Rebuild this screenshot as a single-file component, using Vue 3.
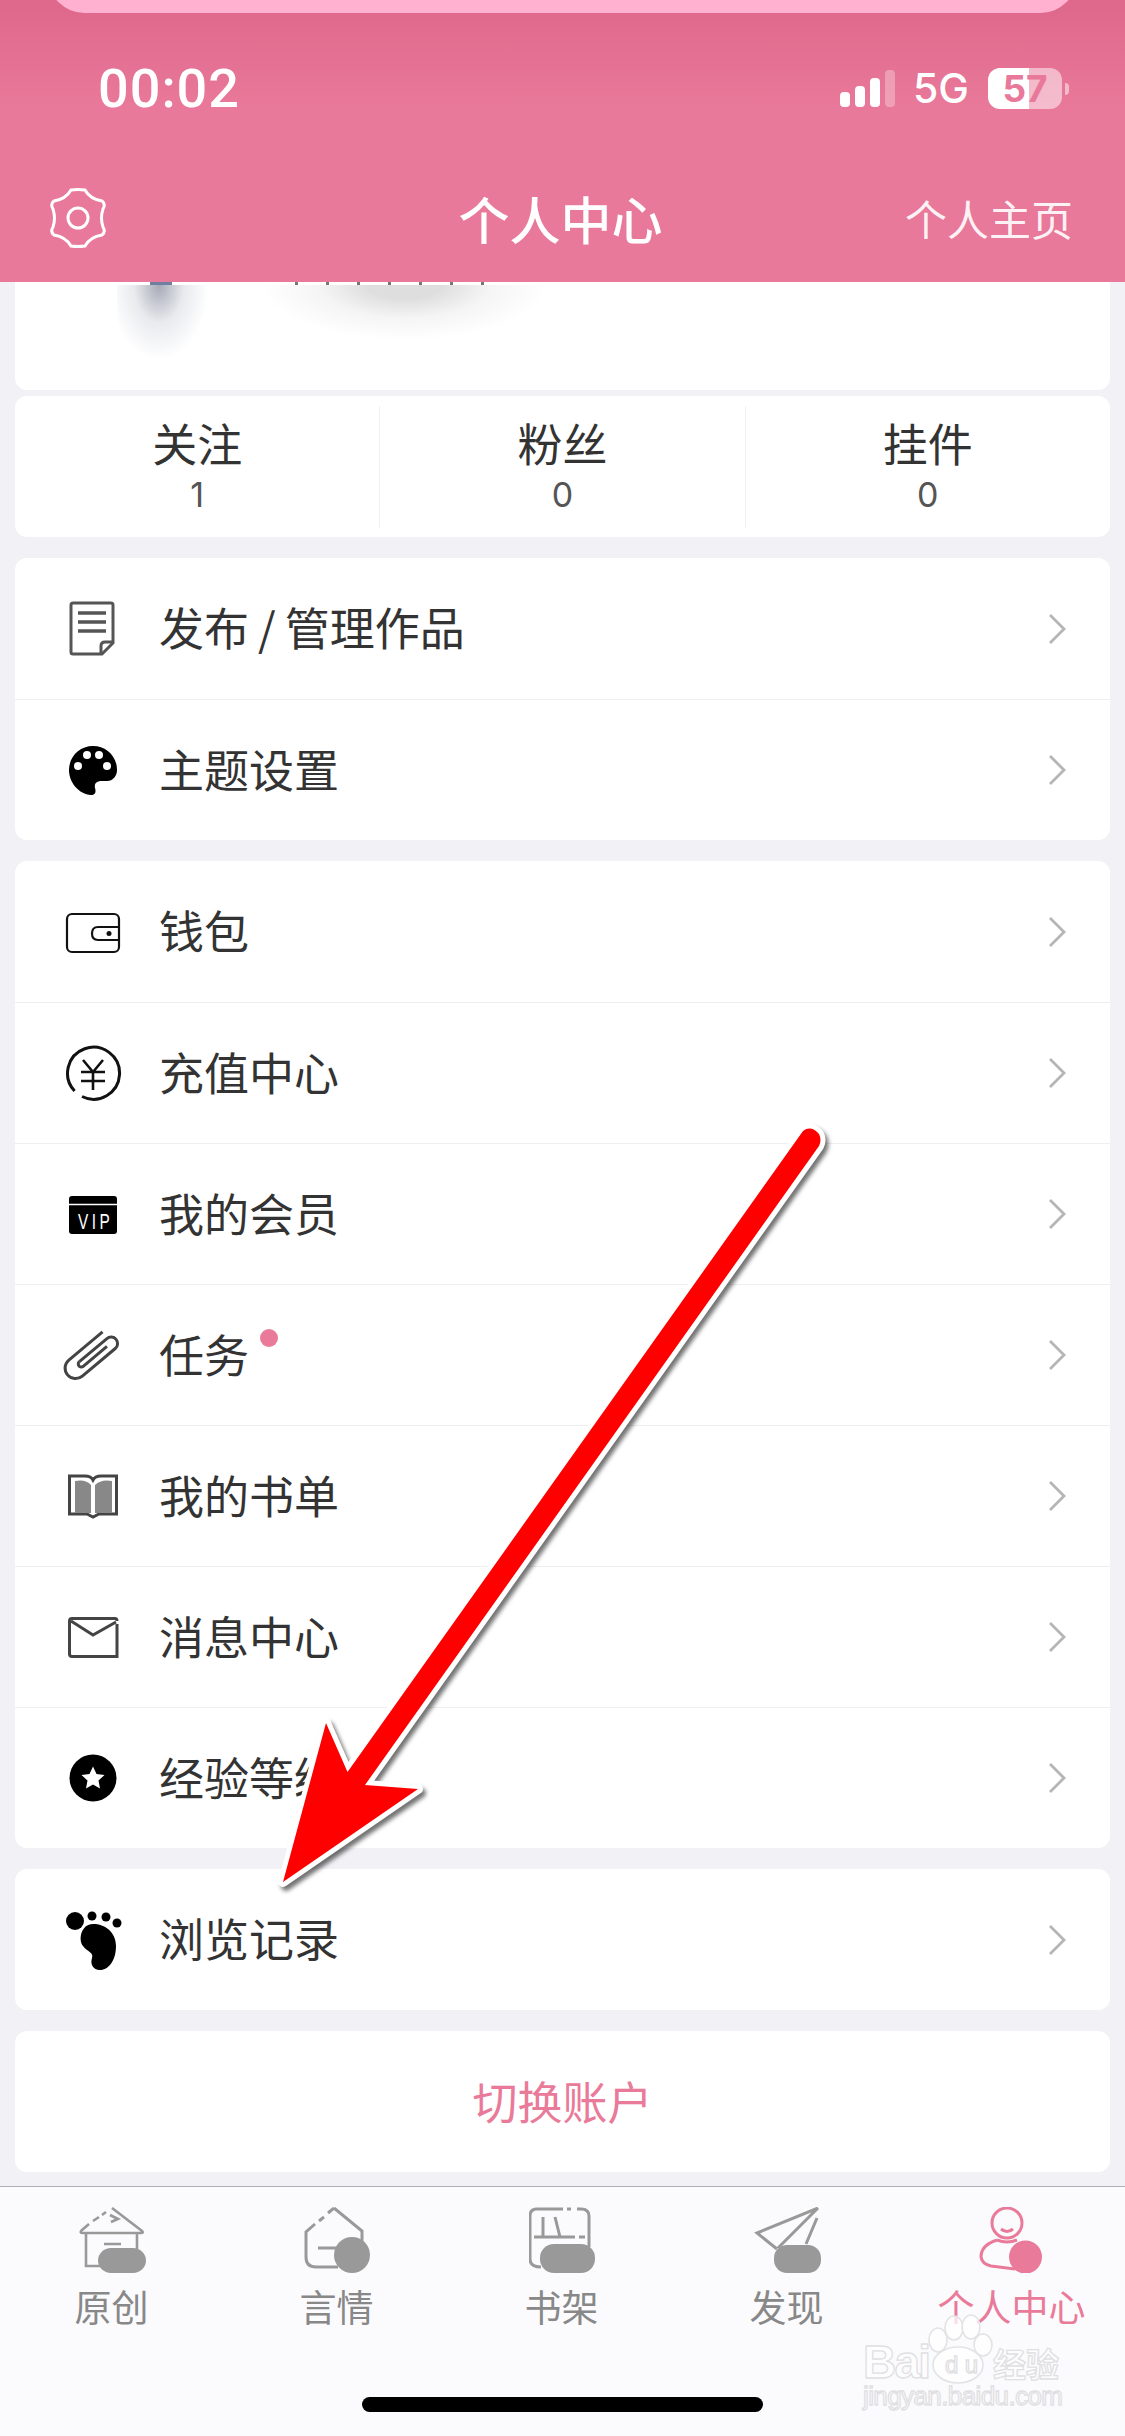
<template>
  <div class="page">
    <header class="top">
      <div class="notch-glow"></div>
      <div class="status">
        <span class="time">00:02</span>
        <div class="status-right">
          <div class="signal">
            <i class="b1"></i><i class="b2"></i><i class="b3"></i><i class="b4"></i>
          </div>
          <span class="net">5G</span>
          <div class="battery"><span>57</span></div>
          <div class="battery-nub"></div>
        </div>
      </div>
      <nav class="nav">
        <svg class="gear" viewBox="0 0 60 60" fill="none" stroke="#fff" stroke-width="3">
          <path d="M23 2Q30 1 37 2Q42 11 54 13Q58 16 55 21Q52 30 55 39Q58 44 54 47Q42 49 37 58Q30 59 23 58Q18 49 6 47Q2 44 5 39Q8 30 5 21Q2 16 6 13Q18 11 23 2Z" />
          <circle cx="30" cy="30" r="10" />
        </svg>
        <h1>个人中心</h1>
        <a class="home-link">个人主页</a>
      </nav>
    </header>

    <main class="content">
      <section class="card profile">
        <div class="profile-cut">
          <i class="cut-avatar"></i>
          <i class="cut-name"></i>
        </div>
        <div class="profile-blur">
          <div class="avatar-blur"></div>
          <div class="name-blur"></div>
        </div>
      </section>

      <section class="card stats">
        <div v-for="s in stats" :key="s.label" class="stat">
          <span class="stat-label">{{ s.label }}</span>
          <span class="stat-num">{{ s.num }}</span>
        </div>
      </section>

      <section v-for="(group, i) in groups" :key="i" class="card group">
        <div v-for="row in group" :key="row.text" class="row">
          <svg class="row-icon" viewBox="0 0 60 60">
            <g v-if="row.icon === 'doc'" fill="none" stroke="#555" stroke-width="3">
              <path d="M10 4H48Q50 4 50 6V44L39 55H10Q8 55 8 53V6Q8 4 10 4Z" />
              <path d="M50 43H42Q38 43 38 47V55" />
              <path d="M15 14H43M15 23H43M15 32H43" stroke-width="3.5" />
            </g>
            <g v-else-if="row.icon === 'palette'">
              <path d="M30 6C16 6 6 17 6 30C6 43 16 54 28 55C33 55 33 51 32 48C31 43 34 41 39 41L44 41C50 41 54 36 54 30C54 16 43 6 30 6Z" />
              <g fill="#fff">
                <circle cx="24" cy="15" r="4" />
                <circle cx="36" cy="15" r="4" />
                <circle cx="44" cy="26" r="4" />
                <circle cx="15" cy="26" r="4" />
              </g>
            </g>
            <g v-else-if="row.icon === 'wallet'" fill="none" stroke="#111" stroke-width="2.2">
              <rect x="4" y="12" width="52" height="38" rx="5" />
              <path d="M56 25H35Q29 25 29 31.5T35 38H56" />
              <circle cx="46" cy="31.5" r="2.5" fill="#111" stroke="none" />
            </g>
            <g v-else-if="row.icon === 'yuan'" fill="none" stroke="#111" stroke-width="3">
              <path d="M11.6 48A26 26 0 1 1 19 53.5" />
              <path d="M20 17L30 29L40 17M18 29H42M18 38H42M30 29V47" stroke-width="2.6" />
            </g>
            <g v-else-if="row.icon === 'vip'">
              <rect x="6" y="12" width="48" height="38" rx="3" />
              <path d="M6 20.5H54" stroke="#fff" stroke-width="1.6" />
              <text class="vip-text" transform="translate(15 44.5) scale(.7 1)">VIP</text>
            </g>
            <g v-else-if="row.icon === 'clip'" fill="none" stroke="#444" stroke-width="3" transform="translate(29 30) rotate(-40)">
              <path d="M-14 -3H22A6.5 6.5 0 0 1 22 10H-21A10.5 10.5 0 0 1 -21 -11H23" />
              <path d="M-14 -3A3 3 0 0 0 -14 3H17" />
            </g>
            <g v-else-if="row.icon === 'book'">
              <path d="M6.5 10H22Q28 10 30 14Q32 10 38 10H53.5V48H36L30 51L24 48H6.5Z" fill="none" stroke="#444" stroke-width="3" />
              <path d="M12 15Q23 13 28 19V47H12ZM32 19Q38 13 49 15V47H32Z" fill="#888" />
            </g>
            <g v-else-if="row.icon === 'mail'" fill="none" stroke="#444" stroke-width="3">
              <path d="M54 17V49.5H9Q6.5 49.5 6.5 47V14Q6.5 11.5 9 11.5H52Q54 11.5 54 14" />
              <path d="M8 14L30 28L53 15" />
            </g>
            <g v-else-if="row.icon === 'star'">
              <circle cx="30" cy="30" r="23.5" />
              <path d="M30 18.5L33.5 26L41.5 27L35.5 32.5L37 40.5L30 36.5L23 40.5L24.5 32.5L18.5 27L26.5 26Z" fill="#fff" />
            </g>
            <g v-else-if="row.icon === 'foot'">
              <circle cx="12" cy="11" r="9" />
              <circle cx="29" cy="6" r="4.5" />
              <circle cx="43" cy="7" r="4.5" />
              <circle cx="54" cy="13" r="4.5" />
              <path d="M30 14C42 14 53 22 53 36C53 50 46 60 37 60C30 60 27 54 29 48C31 42 24 42 20 36C15 30 18 14 30 14Z" />
            </g>
          </svg>
          <span class="row-text">
            {{ row.text }}
            <i v-if="row.dot" class="dot"></i>
          </span>
          <svg class="chevron" viewBox="0 0 18 32" fill="none" stroke="#b5b5b8" stroke-width="2.8">
            <path d="M2 2L16 16L2 30" />
          </svg>
        </div>
      </section>

      <section class="card switch"><span>切换账户</span></section>
    </main>

    <footer class="tabbar">
      <div class="tabs">
        <div v-for="t in tabs" :key="t.label" class="tab" :class="{ active: t.active }">
          <svg class="tab-icon" viewBox="0 0 68 66" fill="none" stroke="#999" stroke-width="2.6">
            <g v-if="t.icon === 'home'">
              <path d="M33 1L63 24Q65 26 62 26H4Q0 26 3 23L10 17M14 14L20 10M23 8L27 5" />
              <path d="M31 8L39 12L32 15M25 37H42M7 26V59H24M58 26V42" />
              <rect x="19" y="41" width="48" height="25" rx="13" fill="#999" stroke="none" />
            </g>
            <g v-else-if="t.icon === 'heart'">
              <path d="M30 1L58 24V36M30 1L24 6M20 10L15 14M11 17L2 25V50Q2 60 12 60H34M14 41H33" stroke-width="3" />
              <circle cx="48" cy="48" r="18" fill="#999" stroke="none" />
            </g>
            <g v-else-if="t.icon === 'shelf'">
              <path d="M34 2H8Q1 2 1 9V52Q1 60 12 60M38 2H42M48 2H52Q60 2 60 9V40" stroke-width="3" />
              <path d="M5 30H46M50 30H56M14 10V30M26 10L31 30" stroke-width="3" />
              <rect x="11" y="37" width="55" height="29" rx="14" fill="#999" stroke="none" />
            </g>
            <g v-else-if="t.icon === 'plane'">
              <path d="M64 1L3 26L23 42M64 1L24 41M63 11L52 37" stroke-width="3" />
              <rect x="20" y="38" width="47" height="28" rx="13" fill="#999" stroke="none" />
            </g>
            <g v-else stroke="#ea7a9a" stroke-width="3">
              <circle cx="28" cy="16" r="15" />
              <path d="M22 22Q28 27 34 22" />
              <path d="M18 33Q2 38 2 50Q3 57 12 59L36 62M18 33Q28 37 38 33" />
              <circle cx="46.5" cy="50" r="16.5" fill="#ea7a9a" stroke="none" />
            </g>
          </svg>
          <span class="tab-label">{{ t.label }}</span>
        </div>
      </div>
      <div class="home-indicator"></div>
    </footer>

    <!-- red arrow someone drew over the screenshot -->
    <svg class="arrow" viewBox="0 0 1125 2436">
      <path d="M283 1882L326 1723L347.5 1772L803 1131Q811 1125 819 1134Q822 1140 819 1146L365 1785L418 1789Z"
        fill="#ff0000" stroke="#fff" stroke-width="10" stroke-linejoin="round" paint-order="stroke" />
    </svg>

    <!-- baidu watermark -->
    <svg class="watermark" viewBox="0 0 210 110">
      <g fill="#ffffff" fill-opacity="0.75" stroke="#e3e3e5" stroke-width="1.6">
        <ellipse cx="78" cy="30" rx="9" ry="12" />
        <ellipse cx="94" cy="18" rx="9" ry="12" />
        <ellipse cx="111" cy="17" rx="9" ry="12" />
        <ellipse cx="123" cy="35" rx="9" ry="11" />
        <ellipse cx="98" cy="55" rx="25" ry="18" />
      </g>
      <g class="wm-text">
        <text x="3" y="68" font-size="46" font-weight="700" textLength="68">Bai</text>
        <text x="85" y="63" font-size="24" textLength="33">du</text>
        <text x="133" y="67" font-size="33" font-weight="700">经验</text>
        <text x="3" y="95" font-size="26" textLength="200">jingyan.baidu.com</text>
      </g>
    </svg>
  </div>
</template>

<script setup>
const stats = [
  { label: '关注', num: 1 },
  { label: '粉丝', num: 0 },
  { label: '挂件', num: 0 }
]

const groups = [
  [
    { icon: 'doc', text: '发布\u2009/\u2009管理作品' },
    { icon: 'palette', text: '主题设置' }
  ],
  [
    { icon: 'wallet', text: '钱包' },
    { icon: 'yuan', text: '充值中心' },
    { icon: 'vip', text: '我的会员' },
    { icon: 'clip', text: '任务', dot: true },
    { icon: 'book', text: '我的书单' },
    { icon: 'mail', text: '消息中心' },
    { icon: 'star', text: '经验等级' }
  ],
  [{ icon: 'foot', text: '浏览记录' }]
]

const tabs = [
  { icon: 'home', label: '原创' },
  { icon: 'heart', label: '言情' },
  { icon: 'shelf', label: '书架' },
  { icon: 'plane', label: '发现' },
  { icon: 'user', label: '个人中心', active: true }
]
</script>

<style>
body {
  margin: 0;
  background: #f1f1f6;
}
</style>

<style scoped>
.page {
  position: relative;
  width: 1125px;
  height: 2436px;
  overflow: hidden;
  display: flex;
  flex-direction: column;
  background: #f1f1f6;
  font-family: "Noto Sans CJK SC", "Noto Sans", sans-serif;
  color: #333;
}

/* header */
.top {
  flex: none;
  height: 282px;
  overflow: hidden;
  position: relative;
  z-index: 2;
  background: linear-gradient(180deg, #df698c 10px, #e9799a 110px);
  color: #fff;
}
.notch-glow {
  height: 73px;
  margin: -60px 48px 0;
  border-radius: 46px;
  background: #ffb1cf;
}
.status {
  height: 41px;
  margin-top: 55px;
  padding: 0 56px 0 98px;
  display: flex;
  align-items: center;
  justify-content: space-between;
  font-family: Inter, "Liberation Sans", sans-serif;
}
.time {
  font-family: Roboto, "Liberation Sans", sans-serif;
  font-size: 54px;
  font-weight: 500;
  letter-spacing: 1px;
  line-height: 41px;
}
.status-right {
  display: flex;
  align-items: center;
}
.signal {
  display: flex;
  align-items: flex-end;
  gap: 5px;
  height: 37px;
  margin-right: 18px;
}
.signal i {
  width: 10px;
  border-radius: 4px;
  background: #fff;
}
.signal .b1 { height: 15px; }
.signal .b2 { height: 21px; }
.signal .b3 { height: 29px; }
.signal .b4 { height: 37px; background: rgba(255, 255, 255, 0.3); }
.net {
  font-size: 41px;
  font-weight: 500;
  line-height: 41px;
  margin-right: 19px;
}
.battery {
  width: 74px;
  height: 41px;
  border-radius: 12px;
  background: linear-gradient(90deg, #fff 55%, rgba(255, 255, 255, 0.5) 55%);
  display: flex;
  align-items: center;
  justify-content: center;
  font-size: 37px;
  font-weight: 700;
  color: #e9799a;
}
.battery-nub {
  width: 4px;
  height: 12px;
  margin-left: 3px;
  border-radius: 0 4px 4px 0;
  background: rgba(255, 255, 255, 0.5);
}
.nav {
  height: 60px;
  margin-top: 78px;
  padding: 0 52px 0 48px;
  display: grid;
  grid-template-columns: 1fr auto 1fr;
  align-items: center;
}
.gear {
  width: 60px;
  height: 60px;
}
.nav h1 {
  margin: 0;
  font-size: 51px;
  font-weight: 500;
  line-height: 60px;
}
.home-link {
  justify-self: end;
  font-size: 42px;
  color: rgba(255, 255, 255, 0.92);
}

/* list */
.content {
  flex: 1;
  min-height: 0;
  padding: 0 15px;
  display: flex;
  flex-direction: column;
  gap: 21px;
}
.card {
  flex: none;
  background: #fff;
  border-radius: 12px;
  overflow: hidden;
}
.profile {
  height: 108px;
  border-radius: 0 0 12px 12px;
  margin-bottom: -15px;
}
.profile-cut {
  height: 3px;
  display: flex;
}
.cut-avatar {
  width: 22px;
  margin-left: 135px;
  background: #6f7f9f;
}
.cut-name {
  width: 215px;
  margin-left: 123px;
  background: repeating-linear-gradient(90deg, #777 0 3px, transparent 3px 31px);
}
.profile-blur {
  display: flex;
  align-items: flex-start;
}
.avatar-blur {
  width: 100px;
  height: 75px;
  margin-left: 102px;
  background: radial-gradient(ellipse 50% 100% at 42% 0, rgba(150, 155, 170, 0.85), rgba(190, 195, 205, 0.35) 50%, transparent);
}
.name-blur {
  width: 285px;
  height: 55px;
  margin-left: 45px;
  background: radial-gradient(ellipse 50% 100% at 50% 0, #dedede 25%, rgba(238, 238, 238, 0.6) 60%, transparent);
}
.stats {
  height: 141px;
  display: flex;
  align-items: center;
}
.stat {
  flex: 1;
  height: 122px;
  display: flex;
  flex-direction: column;
  align-items: center;
  border-left: 1px solid #f1f1f3;
}
.stat:first-child {
  border-left: none;
}
.stat-label {
  font-size: 45px;
  line-height: 48px;
  margin-top: 13px;
}
.stat-num {
  font-family: Inter, "Liberation Sans", sans-serif;
  font-size: 34px;
  line-height: 40px;
  margin-top: 8px;
  color: #555;
}
.row {
  height: 141px;
  box-sizing: border-box;
  padding: 0 44px 0 48px;
  display: flex;
  align-items: center;
  border-top: 1px solid #eeeef0;
}
.row:first-child {
  border-top: none;
}
.row-icon {
  flex: none;
  width: 60px;
  height: 60px;
  margin-right: 36px;
}
.vip-text {
  font-family: "Liberation Sans", sans-serif;
  font-size: 22px;
  letter-spacing: 5px;
  fill: #fff;
}
.row-text {
  flex: 1;
  position: relative;
  margin-bottom: 3px;
  font-size: 45px;
  line-height: 60px;
}
.dot {
  position: absolute;
  left: 101px;
  top: 5px;
  width: 18px;
  height: 18px;
  border-radius: 50%;
  background: #ea7a9a;
}
.chevron {
  flex: none;
  width: 18px;
  height: 32px;
}
.switch {
  height: 141px;
  box-sizing: border-box;
  padding-bottom: 3px;
  display: flex;
  align-items: center;
  justify-content: center;
  font-size: 45px;
  color: #ea7a9a;
}

/* bottom tabs */
.tabbar {
  flex: none;
  height: 250px;
  box-sizing: border-box;
  border-top: 1px solid #b0b0b4;
  background: #fbfbfd;
}
.tabs {
  display: grid;
  grid-template-columns: repeat(5, 1fr);
  padding-top: 20px;
}
.tab {
  display: flex;
  flex-direction: column;
  align-items: center;
  color: #888;
}
.tab.active {
  color: #ea7a9a;
}
.tab-icon {
  width: 68px;
  height: 66px;
}
.tab-label {
  margin-top: 13px;
  margin-right: 2px;
  font-size: 37px;
  line-height: 40px;
}
.home-indicator {
  width: 401px;
  height: 15px;
  margin: 71px auto 0;
  border-radius: 8px;
  background: #000;
}

/* overlays */
.arrow {
  position: absolute;
  left: 0;
  top: 0;
  width: 1125px;
  height: 2436px;
  z-index: 3;
  filter: drop-shadow(3px 4px 2px rgba(0, 0, 0, 0.55));
}
.watermark {
  position: absolute;
  left: 860px;
  top: 2310px;
  width: 210px;
  height: 110px;
  z-index: 3;
}
.wm-text text {
  fill: #fdfdfe;
  stroke: #e0e0e2;
  stroke-width: 1.3;
  font-family: "Liberation Sans", "Noto Sans CJK SC", sans-serif;
}
</style>
